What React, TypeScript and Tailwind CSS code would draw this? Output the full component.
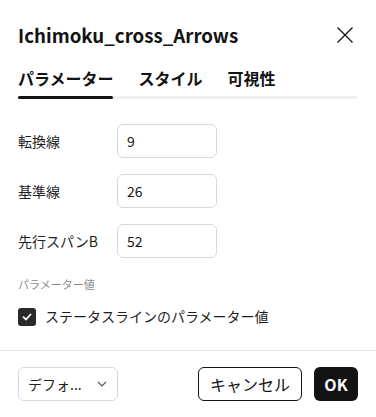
import React from "react";

const font = { fontFamily: '"Noto Sans CJK JP", "Noto Sans", sans-serif' };

function Field({ label, value }: { label: string; value: string }) {
  return (
    <div className="flex items-center h-[34px]">
      <div className="w-[99px] text-[14px] text-[#1f1f1f]">{label}</div>
      <div className="w-[100px] h-[34px] border border-[#d9d9d9] rounded-[6px] flex items-center px-[9px] text-[14px] text-[#131313]">
        {value}
      </div>
    </div>
  );
}

export default function App() {
  return (
    <div className="w-[376px] h-[417px] bg-white flex flex-col" style={font}>
      <div className="px-[18px] pt-[20px] flex items-center justify-between h-[50px]">
        <div className="text-[18.7px] font-semibold text-[#131313] leading-[30px] whitespace-nowrap">Ichimoku_cross_Arrows</div>
        <svg width="18" height="18" viewBox="0 0 18 18" className="mr-[4px]">
          <path d="M1.5 1.5 L16.5 16.5 M16.5 1.5 L1.5 16.5" stroke="#131313" strokeWidth="1.3" fill="none" />
        </svg>
      </div>
      <div className="px-[18px] mt-[16px]">
        <div className="flex gap-[25px] text-[16px] font-bold text-[#131313] leading-[24px] whitespace-nowrap">
          <div>パラメーター</div>
          <div>スタイル</div>
          <div>可視性</div>
        </div>
        <div className="mt-[6px] h-[3px] bg-[#f0f0f0] rounded-full relative">
          <div className="absolute left-0 top-0 h-[3px] w-[95px] bg-[#131313] rounded-full" />
        </div>
      </div>
      <div className="px-[18px] mt-[25px] flex flex-col gap-[16px]">
        <Field label="転換線" value="9" />
        <Field label="基準線" value="26" />
        <Field label="先行スパンB" value="52" />
      </div>
      <div className="px-[18px] mt-[18px] text-[11px] text-[#8c8c8c] leading-[16px]">パラメーター値</div>
      <div className="px-[18px] mt-[14px] flex items-center gap-[9px]">
        <div className="w-[18px] h-[18px] rounded-[3px] bg-[#2a2a2a] flex items-center justify-center">
          <svg width="12" height="12" viewBox="0 0 12 12">
            <path d="M2.5 6.2 L5 8.5 L9.5 3.5" stroke="white" strokeWidth="1.8" fill="none" strokeLinecap="round" strokeLinejoin="round" />
          </svg>
        </div>
        <div className="text-[14px] text-[#1f1f1f]">ステータスラインのパラメーター値</div>
      </div>
      <div className="flex-1" />
      <div className="border-t border-[#e6e6e6] px-[18px] pt-[16px] pb-[16px] flex items-center">
        <div className="w-[100px] h-[34px] border border-[#d9d9d9] rounded-[6px] flex items-center justify-between pl-[9px] pr-[10px] text-[14px] text-[#1f1f1f]">
          <span>デフォ...</span>
          <svg width="10" height="6" viewBox="0 0 10 6">
            <path d="M1 1 L5 5 L9 1" stroke="#555" strokeWidth="1.2" fill="none" />
          </svg>
        </div>
        <div className="flex-1" />
        <div className="w-[104px] h-[34px] border border-[#131313] rounded-[6px] flex items-center justify-center text-[16px] text-[#131313]">
          キャンセル
        </div>
        <div className="ml-[12px] w-[44px] h-[34px] bg-[#131313] rounded-[6px] flex items-center justify-center text-[16px] font-bold text-white">
          OK
        </div>
      </div>
    </div>
  );
}
